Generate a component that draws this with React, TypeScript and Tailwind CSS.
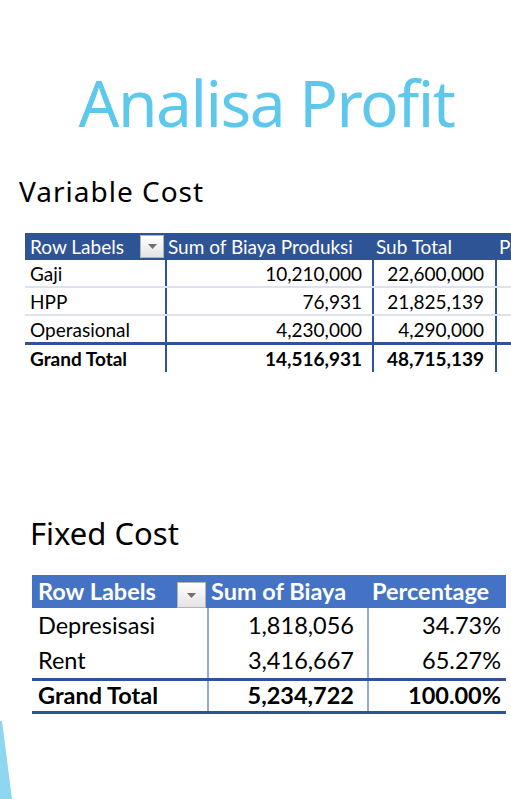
import React from "react"

const variableRows = [
  { label: "Gaji", biaya: "10,210,000", sub: "22,600,000" },
  { label: "HPP", biaya: "76,931", sub: "21,825,139" },
  { label: "Operasional", biaya: "4,230,000", sub: "4,290,000" },
]

const fixedRows = [
  { label: "Depresisasi", biaya: "1,818,056", pct: "34.73%" },
  { label: "Rent", biaya: "3,416,667", pct: "65.27%" },
]

function FilterButton({ className }: { className: string }) {
  return (
    <div
      className={`flex items-center justify-center border border-[#b4b4b4] bg-gradient-to-b from-white to-[#e4e4e4] ${className}`}
    >
      <svg width="9" height="5" viewBox="0 0 9 5">
        <polygon points="0,0 9,0 4.5,5" fill="#6f6f6f" />
      </svg>
    </div>
  )
}

function VariableTable() {
  return (
    <div className="ml-[25px] mt-[28px] w-[486px] overflow-hidden font-['Lato',sans-serif] text-[19px] leading-none text-black">
      <div className="w-[540px]">
        {/* header */}
        <div className="grid h-[27px] grid-cols-[140px_207px_123px_70px] bg-[#2f5496] text-white">
          <div className="flex items-center justify-between pl-[5px] pr-[1px]">
            <span>Row Labels</span>
            <FilterButton className="h-[23px] w-[24px]" />
          </div>
          <div className="flex items-center pl-[3px]">Sum of Biaya Produksi</div>
          <div className="flex items-center pl-[4px]">Sub Total</div>
          <div className="flex items-center pl-[4px]">Percentage</div>
        </div>
        {variableRows.map((row, i) => (
          <div
            key={row.label}
            className={`grid grid-cols-[140px_207px_123px_70px] ${
              i === variableRows.length - 1
                ? "h-[29px] border-b-[3px] border-[#2f5496]"
                : "h-[28px] border-b-2 border-[#dce2ee]"
            }`}
          >
            <div className="flex items-center pl-[5px]">{row.label}</div>
            <div className="flex items-center justify-end border-l-2 border-[#2f5496] pr-[10px]">{row.biaya}</div>
            <div className="flex items-center justify-end border-l-2 border-[#2f5496] pr-[11px]">{row.sub}</div>
            <div className="border-l-2 border-[#2f5496]" />
          </div>
        ))}
        <div className="grid h-[27px] grid-cols-[140px_207px_123px_70px] font-bold">
          <div className="flex items-center pl-[5px]">Grand Total</div>
          <div className="flex items-center justify-end border-l-2 border-[#2f5496] pr-[10px]">14,516,931</div>
          <div className="flex items-center justify-end border-l-2 border-[#2f5496] pr-[11px]">48,715,139</div>
          <div className="border-l-2 border-[#2f5496]" />
        </div>
      </div>
    </div>
  )
}

function FixedTable() {
  return (
    <div className="ml-[32px] mt-[26px] w-[474px] font-['Lato',sans-serif] text-[23.5px] leading-none text-black">
      <div className="grid h-[33px] grid-cols-[175px_160px_139px] bg-[#4472c4] font-bold text-white">
        <div className="flex items-center justify-between pl-[6px] pr-[1px]">
          <span>Row Labels</span>
          <FilterButton className="mt-[7px] h-[26px] w-[29px] self-start" />
        </div>
        <div className="flex items-center pl-[4px]">Sum of Biaya</div>
        <div className="flex items-center pl-[5px]">Percentage</div>
      </div>
      {fixedRows.map((row) => (
        <div key={row.label} className="grid h-[35px] grid-cols-[175px_160px_139px]">
          <div className="flex items-center pl-[6px]">{row.label}</div>
          <div className="flex items-center justify-end border-l-2 border-[#8eaadb] pr-[13px]">{row.biaya}</div>
          <div className="flex items-center justify-end border-l-2 border-[#8eaadb] pr-[5px]">{row.pct}</div>
        </div>
      ))}
      <div className="grid h-[36px] grid-cols-[175px_160px_139px] border-y-[3px] border-[#2f5496] font-bold">
        <div className="flex items-center pl-[6px]">Grand Total</div>
        <div className="flex items-center justify-end border-l-2 border-[#8eaadb] pr-[13px]">5,234,722</div>
        <div className="flex items-center justify-end border-l-2 border-[#8eaadb] pr-[5px]">100.00%</div>
      </div>
    </div>
  )
}

export default function App() {
  return (
    <div className="relative h-[799px] w-[511px] overflow-hidden bg-white">
      <h1 className="mt-[71px] pl-[22px] text-center font-['Noto_Sans',sans-serif] text-[64px] leading-none tracking-[-1.5px] text-[#5ec8ec]">
        Analisa Profit
      </h1>
      <h2 className="ml-[19px] mt-[42px] font-['Noto_Sans',sans-serif] text-[28px] leading-none tracking-[1px] text-black">
        Variable Cost
      </h2>
      <VariableTable />
      <h2 className="ml-[30px] mt-[146px] font-['Noto_Sans',sans-serif] text-[31px] leading-none text-black">
        Fixed Cost
      </h2>
      <FixedTable />

      {/* slide decoration, bottom left */}
      <svg className="absolute bottom-0 left-0" width="14" height="78" viewBox="0 0 14 78">
        <polygon points="0,0 2,0 12,78 0,78" fill="#8fd7f1" />
      </svg>
    </div>
  )
}
